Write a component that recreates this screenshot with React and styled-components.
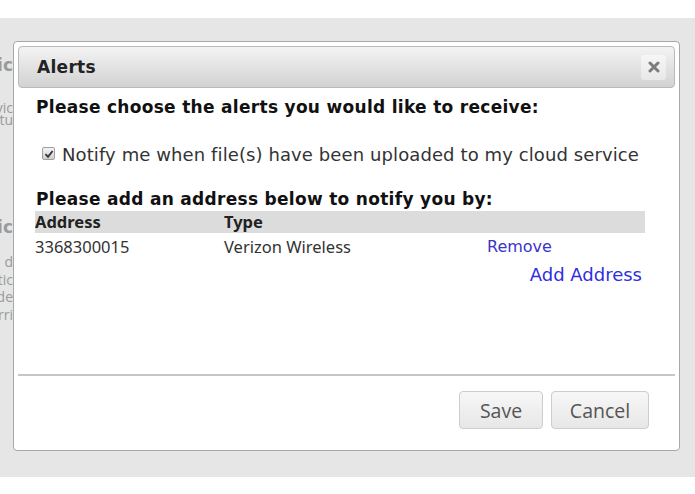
import React from "react";
import styled, { createGlobalStyle } from "styled-components";

const Global = createGlobalStyle`
  html, body { margin: 0; padding: 0; background: #fff; }
  body { font-family: "DejaVu Sans", Verdana, sans-serif; }
`;

const Page = styled.div`
  width: 695px;
  height: 494px;
  display: flex;
  flex-direction: column;
  background: #fff;
`;

const TopStrip = styled.div`
  height: 18px;
  flex: none;
`;

const Backdrop = styled.div`
  position: relative;
  height: 459px;
  flex: none;
  background: #e6e6e6;
  overflow: hidden;
`;

const BehindColumn = styled.div`
  width: 13px;
  overflow: hidden;
  display: flex;
  flex-direction: column;
  align-items: flex-end;
  padding-top: ${(p) => p.$top}px;
`;

const Frag = styled.div`
  white-space: nowrap;
  font-family: ${(p) => (p.$bold ? '"DejaVu Sans", Verdana' : '"Open Sans", "Noto Sans"')}, sans-serif;
  font-weight: ${(p) => (p.$bold ? 700 : 400)};
  font-size: ${(p) => (p.$bold ? 17 : 14)}px;
  color: #9a9a9a;
  height: ${(p) => p.$lh}px;
  line-height: ${(p) => p.$lh}px;
  margin-top: ${(p) => p.$mt || 0}px;
`;

const Dialog = styled.div`
  position: absolute;
  left: 13px;
  top: 23px;
  width: 667px;
  height: 410px;
  box-sizing: border-box;
  background: #fff;
  border: 1px solid #a8a8a8;
  border-radius: 4px;
  padding: 4px;
  display: flex;
  flex-direction: column;
`;

const TitleBar = styled.div`
  height: 42px;
  box-sizing: border-box;
  border: 1px solid #b9b9b9;
  border-radius: 4px;
  background: linear-gradient(#f3f3f3, #d2d2d2);
  display: flex;
  align-items: center;
  justify-content: space-between;
  padding: 0 8px 0 18px;
  flex: none;
`;

const Title = styled.div`
  font-family: "DejaVu Sans", Verdana, sans-serif;
  font-weight: 700;
  font-size: 17px;
  letter-spacing: 0.3px;
  color: #222;
`;

const CloseButton = styled.div`
  width: 25px;
  height: 25px;
  box-sizing: border-box;
  border-radius: 3px;
  background: linear-gradient(#f6f6f6, #e8e8e8);
  display: flex;
  align-items: center;
  justify-content: center;
`;

const Body = styled.div`
  flex: 1;
  padding: 0 32px 0 18px;
  display: flex;
  flex-direction: column;
`;

const Heading = styled.div`
  font-family: "DejaVu Sans", Verdana, sans-serif;
  font-weight: 700;
  font-size: 17px;
  letter-spacing: 0.3px;
  line-height: 22px;
  color: #111;
  margin-top: ${(p) => p.$mt}px;
  white-space: nowrap;
`;

const CheckRow = styled.label`
  display: flex;
  align-items: center;
  gap: 7px;
  margin-top: 26px;
  padding-left: 6px;
  font-family: "DejaVu Sans", Verdana, sans-serif;
  font-size: 18px;
  letter-spacing: 0.1px;
  line-height: 22px;
  color: #333;
  white-space: nowrap;
`;

const CheckBox = styled.span`
  width: 13px;
  height: 13px;
  box-sizing: border-box;
  border: 1px solid #a0a0a0;
  border-radius: 2px;
  background: linear-gradient(#f4f4f4, #cfcfcf);
  display: flex;
  align-items: center;
  justify-content: center;
  margin-top: -3px;
  flex: none;
`;

const Table = styled.div`
  display: grid;
  grid-template-columns: 189px 263px 1fr;
  width: 610px;
  margin-left: -1px;
  margin-top: 1px;
`;

const HeadCell = styled.div`
  background: #dcdcdc;
  height: 22px;
  line-height: 22px;
  font-family: "Noto Sans", "Open Sans", sans-serif;
  font-weight: 700;
  font-size: 16.5px;
  color: #222;
`;

const Cell = styled.div`
  height: 27px;
  line-height: 27px;
  font-family: "Noto Sans", "Open Sans", sans-serif;
  font-size: 16.5px;
  color: #333;
`;

const LinkCell = styled(Cell)`
  font-family: "DejaVu Sans", Verdana, sans-serif;
  font-size: 16px;
  color: #3b35c8;
`;

const AddLink = styled.div`
  align-self: flex-end;
  margin-right: 1px;
  font-family: "DejaVu Sans", Verdana, sans-serif;
  font-size: 18px;
  line-height: 22px;
  color: #2f2ee0;
  margin-top: 4px;
`;

const Separator = styled.div`
  height: 2px;
  background: #c6c6c6;
  flex: none;
`;

const Footer = styled.div`
  display: flex;
  justify-content: flex-end;
  gap: 8px;
  padding: 15px 26px 17px 0;
`;

const Button = styled.div`
  width: ${(p) => p.$w}px;
  height: 38px;
  box-sizing: border-box;
  border: 1px solid #cdcdcd;
  border-radius: 4px;
  background: linear-gradient(#f7f7f7, #e7e7e7);
  display: flex;
  align-items: center;
  justify-content: center;
  font-family: "Open Sans", "Noto Sans", sans-serif;
  font-size: 19.5px;
  color: #555;
`;

const frags = [
  { t: "ic", bold: true, lh: 16, mt: 0 },
  { t: "vic", lh: 12, mt: 29 },
  { t: "tu", lh: 12, mt: 0 },
  { t: "ic", bold: true, lh: 16, mt: 93 },
  { t: "d", lh: 14, mt: 20 },
  { t: "tic", lh: 14, mt: 4 },
  { t: "de", lh: 14, mt: 3 },
  { t: "rri", lh: 14, mt: 4 },
];

export default function App() {
  return (
    <>
      <Global />
      <Page>
        <TopStrip />
        <Backdrop>
          <BehindColumn $top={39}>
            {frags.map((f, i) => (
              <Frag key={i} $bold={f.bold} $lh={f.lh} $mt={f.mt}>
                {f.t}
              </Frag>
            ))}
          </BehindColumn>
          <Dialog>
            <TitleBar>
              <Title>Alerts</Title>
              <CloseButton>
                <svg width="12" height="12" viewBox="0 0 12 12">
                  <path d="M2 2 L10 10 M10 2 L2 10" stroke="#7d7d7d" strokeWidth="3" strokeLinecap="round" />
                </svg>
              </CloseButton>
            </TitleBar>
            <Body>
              <Heading $mt={8}>Please choose the alerts you would like to receive:</Heading>
              <CheckRow>
                <CheckBox>
                  <svg width="10" height="10" viewBox="0 0 10 10">
                    <path d="M1.5 5.2 L4 7.8 L8.6 2" stroke="#333" strokeWidth="1.8" fill="none" />
                  </svg>
                </CheckBox>
                Notify me when file(s) have been uploaded to my cloud service
              </CheckRow>
              <Heading $mt={22}>Please add an address below to notify you by:</Heading>
              <Table>
                <HeadCell>Address</HeadCell>
                <HeadCell>Type</HeadCell>
                <HeadCell />
                <Cell>3368300015</Cell>
                <Cell>Verizon Wireless</Cell>
                <LinkCell>Remove</LinkCell>
              </Table>
              <AddLink>Add Address</AddLink>
            </Body>
            <Separator />
            <Footer>
              <Button $w={84}>Save</Button>
              <Button $w={98}>Cancel</Button>
            </Footer>
          </Dialog>
        </Backdrop>
      </Page>
    </>
  );
}
